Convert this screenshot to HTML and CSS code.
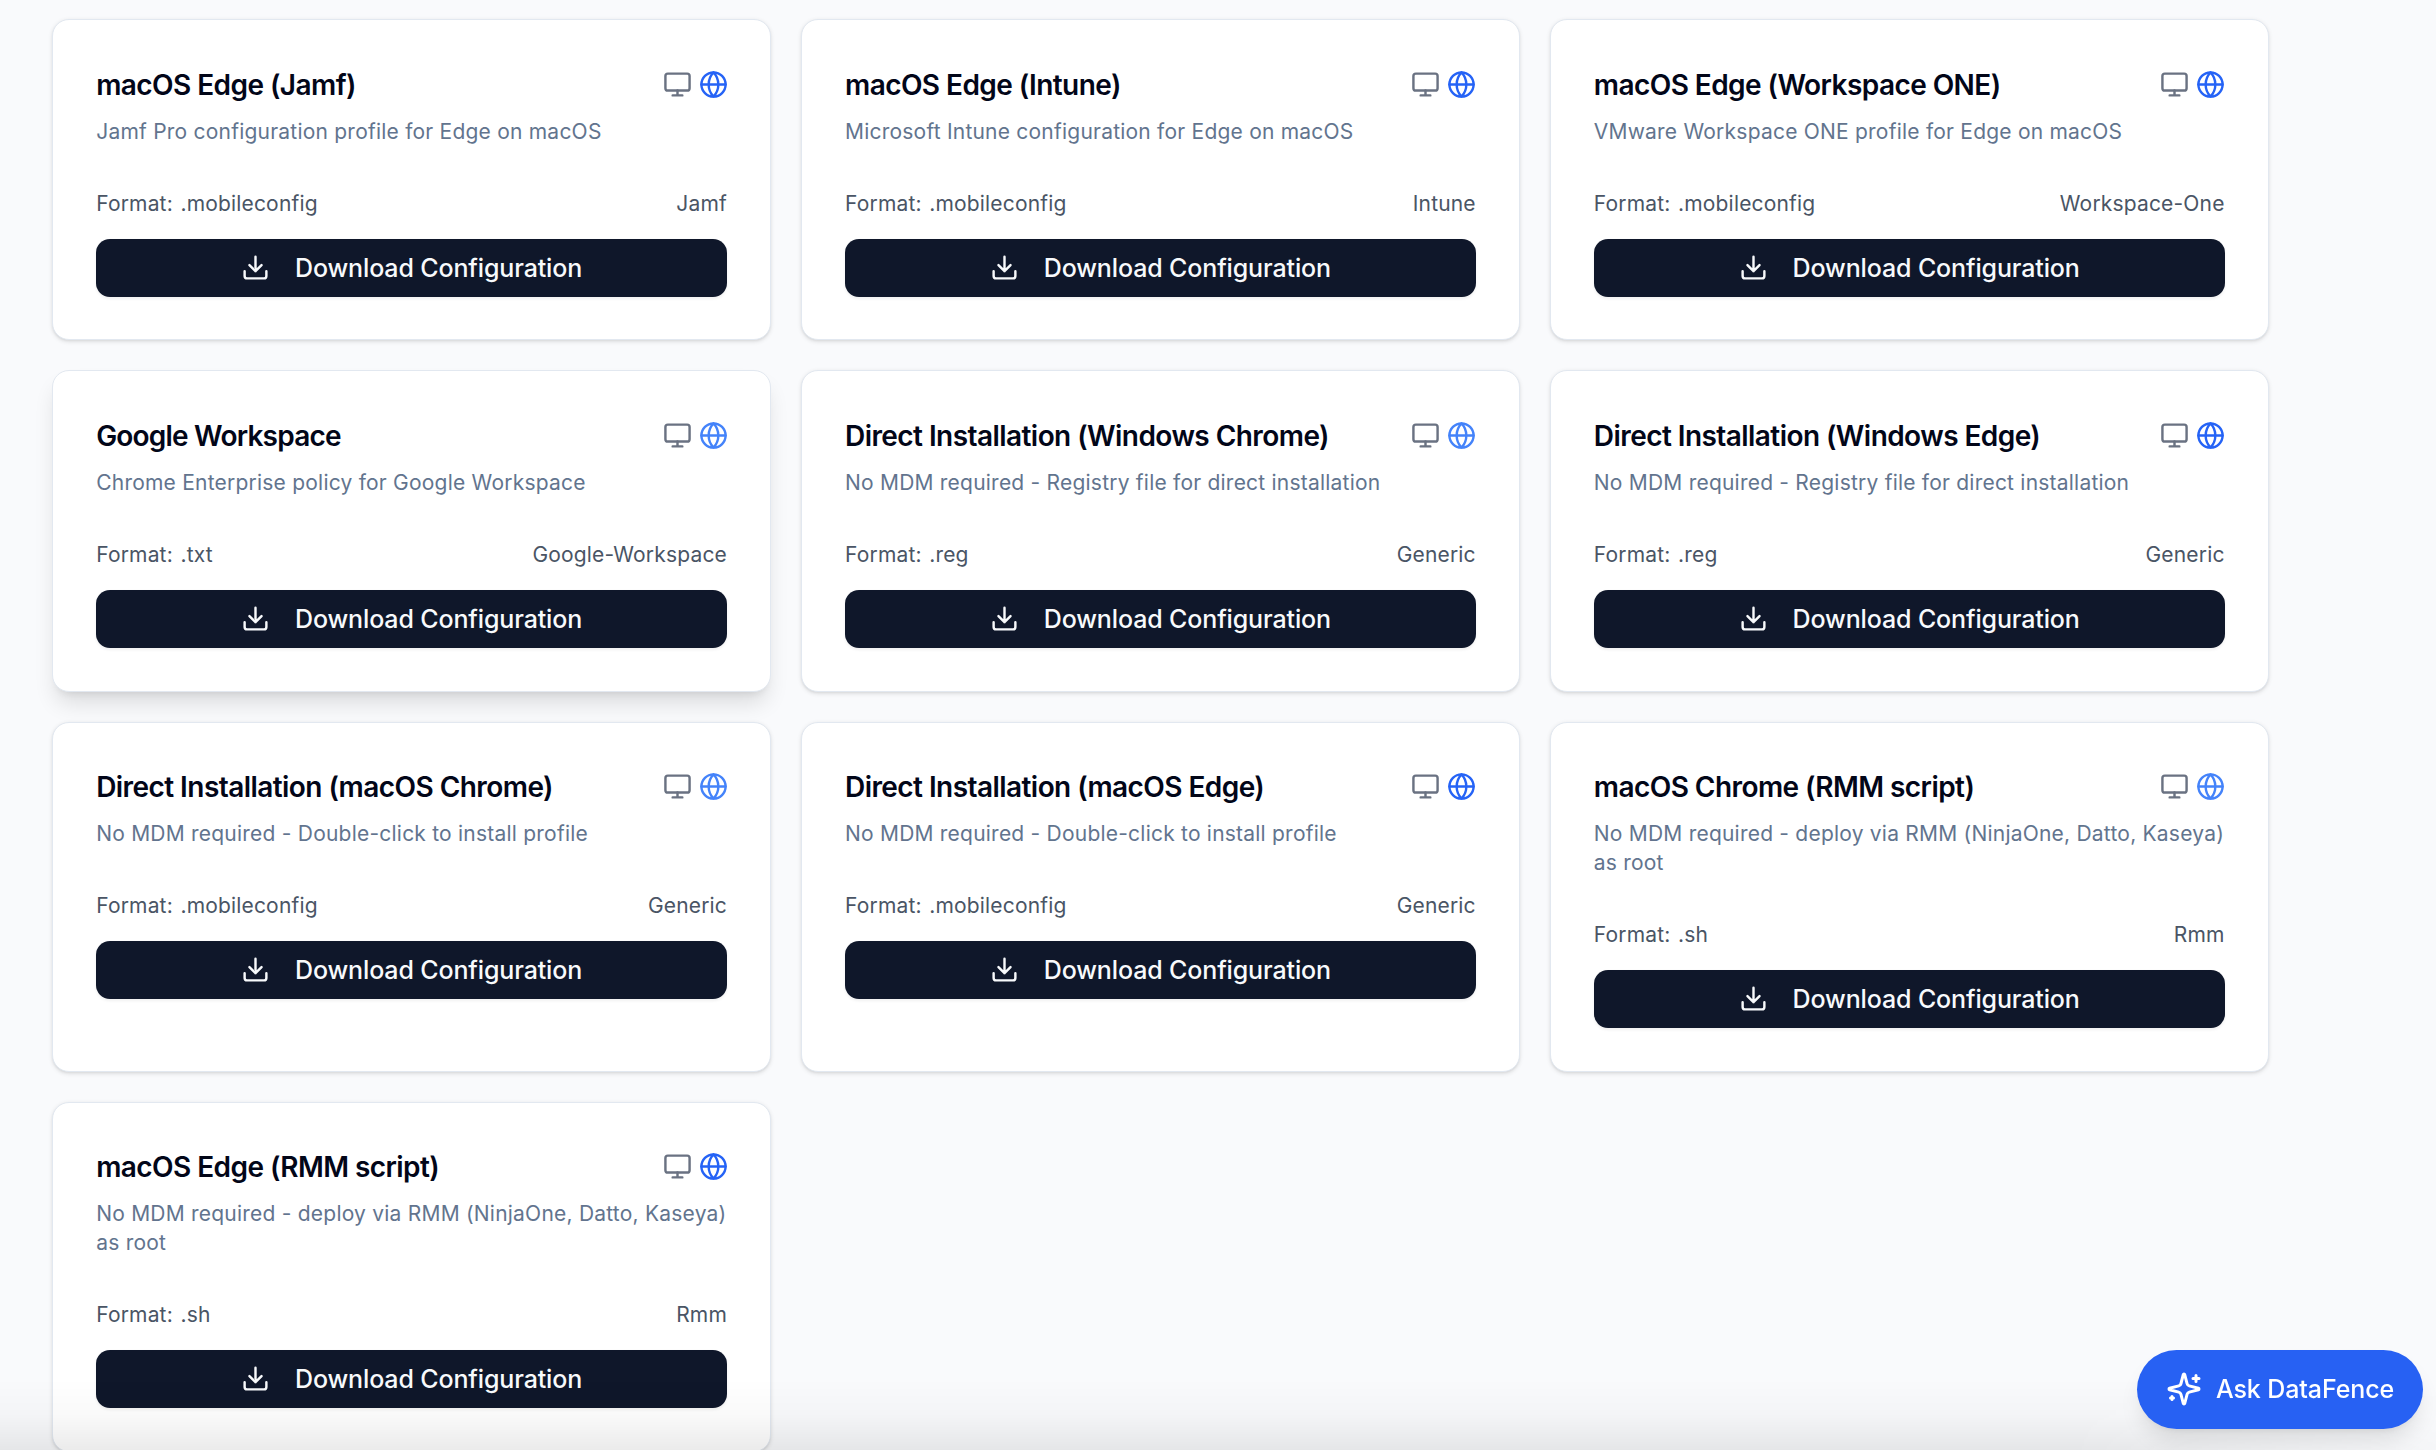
FILE: index.html
```html
<!DOCTYPE html>
<html lang="en">
<head>
<meta charset="utf-8">
<title>Configurations</title>
<link rel="stylesheet" href="styles.css">
</head>
<body>
<svg class="sprite" aria-hidden="true">
  <symbol id="monitor" viewBox="0 0 24 24"><rect width="20" height="14" x="2" y="3" rx="2"/><path d="M8 21h8M12 17v4"/></symbol>
  <symbol id="globe" viewBox="0 0 24 24"><circle cx="12" cy="12" r="10"/><path d="M12 2a14.5 14.5 0 0 0 0 20 14.5 14.5 0 0 0 0-20M2 12h20"/></symbol>
  <symbol id="download" viewBox="0 0 24 24"><path d="M21 15v4a2 2 0 0 1-2 2H5a2 2 0 0 1-2-2v-4M7 10l5 5 5-5M12 15V3"/></symbol>
  <symbol id="sparkles" viewBox="0 0 24 24"><path d="M9.937 15.5A2 2 0 0 0 8.5 14.063l-6.135-1.582a.5.5 0 0 1 0-.962L8.5 9.936A2 2 0 0 0 9.937 8.5l1.582-6.135a.5.5 0 0 1 .963 0L14.063 8.5A2 2 0 0 0 15.5 9.937l6.135 1.581a.5.5 0 0 1 0 .964L15.5 14.063a2 2 0 0 0-1.437 1.437l-1.582 6.135a.5.5 0 0 1-.963 0zM20 3v4M22 5h-4M4 17v2M5 18H3"/></symbol>
</svg>
<main class="grid">
  <article class="card">
    <header class="head"><h3 class="title">macOS Edge (Jamf)</h3><div class="icons"><svg class="icon"><use href="#monitor"/></svg><svg class="icon edge"><use href="#globe"/></svg></div></header>
    <p class="desc">Jamf Pro configuration profile for Edge on macOS</p>
    <div class="meta"><span>Format: .mobileconfig</span><span>Jamf</span></div>
    <button class="btn"><svg class="icon"><use href="#download"/></svg>Download Configuration</button>
  </article>
  <article class="card">
    <header class="head"><h3 class="title">macOS Edge (Intune)</h3><div class="icons"><svg class="icon"><use href="#monitor"/></svg><svg class="icon edge"><use href="#globe"/></svg></div></header>
    <p class="desc">Microsoft Intune configuration for Edge on macOS</p>
    <div class="meta"><span>Format: .mobileconfig</span><span>Intune</span></div>
    <button class="btn"><svg class="icon"><use href="#download"/></svg>Download Configuration</button>
  </article>
  <article class="card">
    <header class="head"><h3 class="title">macOS Edge (Workspace ONE)</h3><div class="icons"><svg class="icon"><use href="#monitor"/></svg><svg class="icon edge"><use href="#globe"/></svg></div></header>
    <p class="desc">VMware Workspace ONE profile for Edge on macOS</p>
    <div class="meta"><span>Format: .mobileconfig</span><span>Workspace-One</span></div>
    <button class="btn"><svg class="icon"><use href="#download"/></svg>Download Configuration</button>
  </article>
  <article class="card raised">
    <header class="head"><h3 class="title tight">Google Workspace</h3><div class="icons"><svg class="icon"><use href="#monitor"/></svg><svg class="icon chrome"><use href="#globe"/></svg></div></header>
    <p class="desc">Chrome Enterprise policy for Google Workspace</p>
    <div class="meta"><span>Format: .txt</span><span>Google-Workspace</span></div>
    <button class="btn"><svg class="icon"><use href="#download"/></svg>Download Configuration</button>
  </article>
  <article class="card">
    <header class="head"><h3 class="title">Direct Installation (Windows Chrome)</h3><div class="icons"><svg class="icon"><use href="#monitor"/></svg><svg class="icon chrome"><use href="#globe"/></svg></div></header>
    <p class="desc">No MDM required - Registry file for direct installation</p>
    <div class="meta"><span>Format: .reg</span><span>Generic</span></div>
    <button class="btn"><svg class="icon"><use href="#download"/></svg>Download Configuration</button>
  </article>
  <article class="card">
    <header class="head"><h3 class="title">Direct Installation (Windows Edge)</h3><div class="icons"><svg class="icon"><use href="#monitor"/></svg><svg class="icon edge"><use href="#globe"/></svg></div></header>
    <p class="desc">No MDM required - Registry file for direct installation</p>
    <div class="meta"><span>Format: .reg</span><span>Generic</span></div>
    <button class="btn"><svg class="icon"><use href="#download"/></svg>Download Configuration</button>
  </article>
  <article class="card">
    <header class="head"><h3 class="title">Direct Installation (macOS Chrome)</h3><div class="icons"><svg class="icon"><use href="#monitor"/></svg><svg class="icon chrome"><use href="#globe"/></svg></div></header>
    <p class="desc">No MDM required - Double-click to install profile</p>
    <div class="meta"><span>Format: .mobileconfig</span><span>Generic</span></div>
    <button class="btn"><svg class="icon"><use href="#download"/></svg>Download Configuration</button>
  </article>
  <article class="card">
    <header class="head"><h3 class="title">Direct Installation (macOS Edge)</h3><div class="icons"><svg class="icon"><use href="#monitor"/></svg><svg class="icon edge"><use href="#globe"/></svg></div></header>
    <p class="desc">No MDM required - Double-click to install profile</p>
    <div class="meta"><span>Format: .mobileconfig</span><span>Generic</span></div>
    <button class="btn"><svg class="icon"><use href="#download"/></svg>Download Configuration</button>
  </article>
  <article class="card">
    <header class="head"><h3 class="title">macOS Chrome (RMM script)</h3><div class="icons"><svg class="icon"><use href="#monitor"/></svg><svg class="icon chrome"><use href="#globe"/></svg></div></header>
    <p class="desc">No MDM required - deploy via RMM (NinjaOne, Datto, Kaseya) as root</p>
    <div class="meta"><span>Format: .sh</span><span>Rmm</span></div>
    <button class="btn"><svg class="icon"><use href="#download"/></svg>Download Configuration</button>
  </article>
  <article class="card">
    <header class="head"><h3 class="title">macOS Edge (RMM script)</h3><div class="icons"><svg class="icon"><use href="#monitor"/></svg><svg class="icon edge"><use href="#globe"/></svg></div></header>
    <p class="desc">No MDM required - deploy via RMM (NinjaOne, Datto, Kaseya) as root</p>
    <div class="meta"><span>Format: .sh</span><span>Rmm</span></div>
    <button class="btn"><svg class="icon"><use href="#download"/></svg>Download Configuration</button>
  </article>
</main>
<div class="fade"></div>
<button class="ask"><svg class="icon"><use href="#sparkles"/></svg>Ask DataFence</button>
</body>
</html>
```
FILE: styles.css
```css
* { box-sizing: border-box; }
body {
  margin: 0;
  height: 1450px;
  overflow: hidden;
  background: #f9fafc;
  font-family: Inter, "Liberation Sans", sans-serif;
}
.sprite { display: none; }
.grid {
  display: grid;
  grid-template-columns: repeat(3, minmax(0, 1fr));
  gap: 30px;
  width: 2268.6px;
  padding: 19.4px 0 0 52.2px;
}
.card {
  display: flex;
  flex-direction: column;
  padding: 50.7px 43px 42.3px;
  background: #fff;
  border: 1px solid #e2e8f0;
  border-radius: 17px;
  box-shadow: 0 1.5px 4px rgba(0, 0, 0, .1), 0 1.5px 3px -1.5px rgba(0, 0, 0, .1);
}
.raised {
  box-shadow: 0 14.5px 22px -4px rgba(0, 0, 0, .12), 0 6px 9px -6px rgba(0, 0, 0, .12);
}
.head {
  display: flex;
  justify-content: space-between;
  align-items: center;
  height: 29px;
}
.title {
  margin: 0;
  font-size: 28px;
  font-weight: 600;
  line-height: 29px;
  letter-spacing: -.56px;
  white-space: nowrap;
  color: #020618;
}
.tight { letter-spacing: -.8px; }
.icons {
  display: flex;
  gap: 7px;
  margin: -2px -.6px 0 0;
  color: #6a7282;
}
.icon {
  flex: none;
  width: 29px;
  height: 29px;
  fill: none;
  stroke: currentColor;
  stroke-width: 2;
  stroke-linecap: round;
  stroke-linejoin: round;
}
.edge { color: #2563f6; }
.chrome { color: #4483fa; }
.desc {
  margin: 17px -4px 43.1px 0;
  font-size: 21px;
  line-height: 29px;
  letter-spacing: .22px;
  color: #62748e;
}
.meta {
  display: flex;
  justify-content: space-between;
  margin-bottom: 21px;
  font-size: 21px;
  line-height: 29px;
  letter-spacing: .17px;
  word-spacing: 1.5px;
  color: #4a5565;
}
.btn {
  display: flex;
  justify-content: center;
  align-items: center;
  gap: 25px;
  height: 58px;
  padding: 0;
  border: 0;
  border-radius: 14px;
  background: #0f172a;
  color: #f8fafc;
  font: 450 25px Inter, "Liberation Sans", sans-serif;
  letter-spacing: -.13px;
  box-shadow: 0 1.5px 3px rgba(0, 0, 0, .06);
}
.btn .icon { margin-top: -1px; }
.fade {
  position: fixed;
  left: 0;
  right: 0;
  bottom: 0;
  height: 72px;
  background: linear-gradient(rgba(0, 0, 0, 0), rgba(0, 0, 0, .02) 50%, rgba(0, 0, 0, .08));
  mask-image: linear-gradient(to right, #000 85%, rgba(0, 0, 0, .2));
}
.ask {
  position: fixed;
  right: 13px;
  bottom: 21.5px;
  display: flex;
  align-items: center;
  justify-content: center;
  gap: 14px;
  width: 286px;
  height: 78.5px;
  padding: 0;
  border: 0;
  border-radius: 40px;
  background: #2761f3;
  color: #fff;
  font: 450 25px Inter, "Liberation Sans", sans-serif;
  letter-spacing: -.1px;
  box-shadow: 0 14.5px 22px -4px rgba(0, 0, 0, .1), 0 6px 9px -6px rgba(0, 0, 0, .1);
}
.ask .icon { width: 36px; height: 36px; }
```
